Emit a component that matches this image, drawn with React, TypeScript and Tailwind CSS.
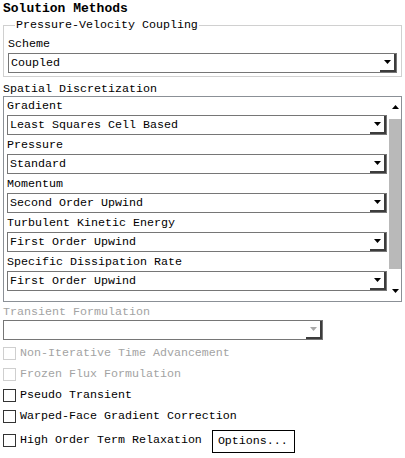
import React from 'react';

const font = "font-['Liberation_Mono','DejaVu_Sans_Mono',monospace]";

function Arrow({ up, dim }: { up?: boolean; dim?: boolean }) {
  return (
    <svg width="7" height="4" viewBox="0 0 7 4" className="block">
      <polygon
        points={up ? '0,4 7,4 3.5,0' : '0,0 7,0 3.5,4'}
        fill={dim ? '#a8a8a8' : '#000'}
      />
    </svg>
  );
}

function Combo({ value, dim, className = '' }: { value?: string; dim?: boolean; className?: string }) {
  return (
    <div className={`flex h-[20px] border border-[#767676] bg-white ${className}`}>
      <div className="flex-1 truncate pl-[2px] leading-[18px]">{value}</div>
      <div className="flex w-[16px] items-center justify-center border-r-2 border-b-2 border-[#3c3c3c]">
        <Arrow dim={dim} />
      </div>
    </div>
  );
}

function Check({ label, dim }: { label: string; dim?: boolean }) {
  return (
    <div className={`flex h-[21px] items-center gap-[4px] ${dim ? 'text-[#a3a3a3]' : 'text-black'}`}>
      <div className={`h-[13px] w-[13px] border ${dim ? 'border-[#cfcfcf]' : 'border-[#333]'}`} />
      <span className="leading-[15px]">{label}</span>
    </div>
  );
}

const rows = [
  ['Gradient', 'Least Squares Cell Based'],
  ['Pressure', 'Standard'],
  ['Momentum', 'Second Order Upwind'],
  ['Turbulent Kinetic Energy', 'First Order Upwind'],
  ['Specific Dissipation Rate', 'First Order Upwind'],
];

export default function App() {
  return (
    <div className={`h-[458px] w-[405px] overflow-hidden bg-white text-[11.67px] text-black ${font}`}>
      <div className="h-[19px] pl-[3px] pt-[1px] text-[13px] font-bold leading-[15px]">Solution Methods</div>

      <fieldset className="mx-[3px] border border-[#d0d0d0] px-[4px] pb-[3px]">
        <legend className="ml-[7px] px-[1px] leading-[13px]">Pressure-Velocity Coupling</legend>
        <div className="mt-[4px] h-[16px] leading-[16px]">Scheme</div>
        <Combo value="Coupled" className="mt-[1px]" />
      </fieldset>

      <div className="mt-[5px] h-[14px] pl-[3px] leading-[14px]">Spatial Discretization</div>
      <div className="mx-[3px] flex h-[206px] border border-[#8b9096]">
        <div className="flex-1 pl-[3px] pr-[2px]">
          {rows.map(([label, value]) => (
            <div key={label} className="h-[39px]">
              <div className="h-[18px] pt-[1px] leading-[16px]">{label}</div>
              <Combo value={value} />
            </div>
          ))}
        </div>
        <div className="flex w-[12px] flex-col items-center">
          <div className="mt-[8px] h-[4px]">
            <Arrow up />
          </div>
          <div className="mt-[10px] h-[150px] w-full bg-[#b9b9b9]" />
          <div className="mt-[20px] h-[4px]">
            <Arrow />
          </div>
        </div>
      </div>

      <div className="mt-[2px] h-[16px] pl-[3px] leading-[16px] text-[#a3a3a3]">Transient Formulation</div>
      <div className="pl-[3px]">
        <Combo dim className="w-[320px]" />
      </div>

      <div className="mt-[3px] pl-[3px]">
        <Check label="Non-Iterative Time Advancement" dim />
        <Check label="Frozen Flux Formulation" dim />
        <Check label="Pseudo Transient" />
        <Check label="Warped-Face Gradient Correction" />
        <div className="flex items-center">
          <Check label="High Order Term Relaxation" />
          <button className="ml-[10px] mt-[3px] h-[23px] w-[83px] border border-black bg-white pl-[5px] text-left leading-[21px]">
            Options...
          </button>
        </div>
      </div>
    </div>
  );
}
